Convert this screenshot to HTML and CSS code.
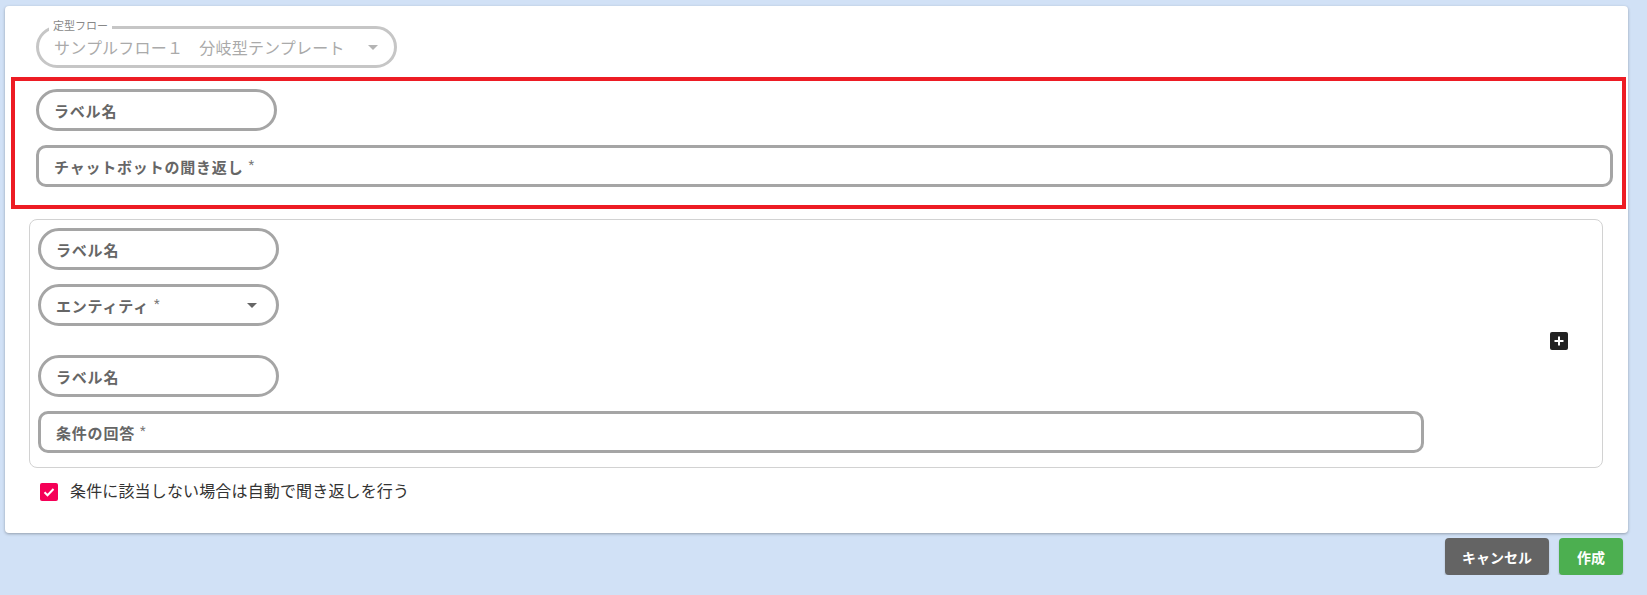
FILE: index.html
```html
<!DOCTYPE html>
<html lang="ja">
<head>
    <meta charset="UTF-8">
    <meta name="viewport" content="width=device-width, initial-scale=1.0">
    <title>分岐フロー作成</title>
    <link rel="stylesheet" href="styles.css">
</head>
<body>
    <div class="panel">
        <div class="flow-select">
            <span class="flow-label">定型フロー</span>
            <span class="flow-value">サンプルフロー１　分岐型テンプレート</span>
            <span class="arrow disabled"></span>
        </div>

        <div class="highlight">
            <div class="field pill">ラベル名</div>
            <div class="field box">チャットボットの聞き返し<span class="req">*</span></div>
        </div>

        <div class="branch">
            <div class="branch-fields">
                <div class="field pill">ラベル名</div>
                <div class="field pill select">エンティティ<span class="req">*</span><span class="arrow"></span></div>
                <div class="field pill spaced">ラベル名</div>
                <div class="field box">条件の回答<span class="req">*</span></div>
            </div>
            <button class="add-button">
                <svg width="10" height="10" viewBox="0 0 10 10">
                    <path d="M5 0.5v9M0.5 5h9" stroke="#fff" stroke-width="2"/>
                </svg>
            </button>
        </div>

        <label class="check-row">
            <span class="checkbox">
                <svg width="14" height="14" viewBox="0 0 14 14">
                    <path d="M2.5 7.2l3 3 6-6.2" fill="none" stroke="#fff" stroke-width="2"/>
                </svg>
            </span>
            条件に該当しない場合は自動で聞き返しを行う
        </label>
    </div>

    <div class="actions">
        <button class="btn cancel">キャンセル</button>
        <button class="btn create">作成</button>
    </div>
</body>
</html>
```

FILE: styles.css
```css
body {
    margin: 0;
    font-family: Roboto, "Noto Sans CJK JP", sans-serif;
    background-color: #d1e1f6;
    color: #333;
}
.panel {
    margin: 6px 19px 0 5px;
    padding: 20px 2px 29px 6px;
    background-color: #fff;
    border-radius: 4px;
    box-shadow: 0 1px 3px rgba(0, 0, 0, 0.3);
}
.flow-select {
    position: relative;
    box-sizing: border-box;
    width: 361px;
    height: 42px;
    margin-left: 25px;
    padding: 0 16px 0 15px;
    border: 3px solid #c6c6c6;
    border-radius: 21px;
    display: flex;
    align-items: center;
}
.flow-label {
    position: absolute;
    top: -9px;
    left: 10px;
    padding: 0 4px;
    background-color: #fff;
    font-size: 11px;
    line-height: 14px;
    color: #888;
}
.flow-value {
    flex: 1;
    font-size: 16px;
    letter-spacing: 0.2px;
    color: #aaa;
}
.arrow {
    width: 0;
    height: 0;
    margin-left: auto;
    border-left: 5px solid transparent;
    border-right: 5px solid transparent;
    border-top: 5px solid #666;
}
.arrow.disabled {
    border-top-color: #b4b4b4;
}
.highlight {
    margin-top: 9px;
    padding: 8px 9px 18px 21px;
    border: 4px solid #ed1c24;
    display: flex;
    flex-direction: column;
    gap: 14px;
}
.field {
    box-sizing: border-box;
    height: 42px;
    padding: 0 15px;
    border: 3px solid #a5a5a5;
    display: flex;
    align-items: center;
    font-size: 15px;
    font-weight: 700;
    letter-spacing: 0.8px;
    color: #666;
}
.field.pill {
    width: 241px;
    border-radius: 21px;
}
.field.box {
    border-radius: 10px;
}
.field.select {
    padding-right: 19px;
}
.field.spaced {
    margin-top: 15px;
}
.req {
    margin: 9px 0 0 5px;
    align-self: flex-start;
    font-weight: 400;
    font-size: 13px;
    color: #777;
}
.branch {
    margin: 10px 23px 0 18px;
    padding: 8px 0 14px 8px;
    border: 1px solid #d2d2d2;
    border-radius: 8px;
    display: flex;
    align-items: center;
}
.branch-fields {
    flex: 1;
    display: flex;
    flex-direction: column;
    gap: 14px;
}
.add-button {
    width: 18px;
    height: 18px;
    margin: 0 34px 0 126px;
    padding: 0;
    border: none;
    border-radius: 2px;
    background-color: #222;
    display: flex;
    align-items: center;
    justify-content: center;
    cursor: pointer;
}
.check-row {
    margin: 12px 0 0 29px;
    display: flex;
    align-items: center;
    gap: 12px;
    font-size: 16px;
    line-height: 24px;
    letter-spacing: 0.15px;
    color: #333;
}
.checkbox {
    width: 18px;
    height: 18px;
    border-radius: 2px;
    background-color: #f50057;
    display: flex;
    align-items: center;
    justify-content: center;
}
.actions {
    margin: 5px 24px 0 0;
    display: flex;
    justify-content: flex-end;
    gap: 10px;
}
.btn {
    height: 37px;
    padding: 0 16px;
    border: none;
    border-radius: 4px;
    color: #fff;
    font-family: Roboto, "Noto Sans CJK JP", sans-serif;
    font-size: 14px;
    font-weight: 700;
    box-shadow: 0 2px 2px rgba(0, 0, 0, 0.2);
    cursor: pointer;
}
.btn.cancel {
    width: 104px;
    background-color: #646464;
}
.btn.create {
    width: 64px;
    background-color: #4caf50;
}
```
